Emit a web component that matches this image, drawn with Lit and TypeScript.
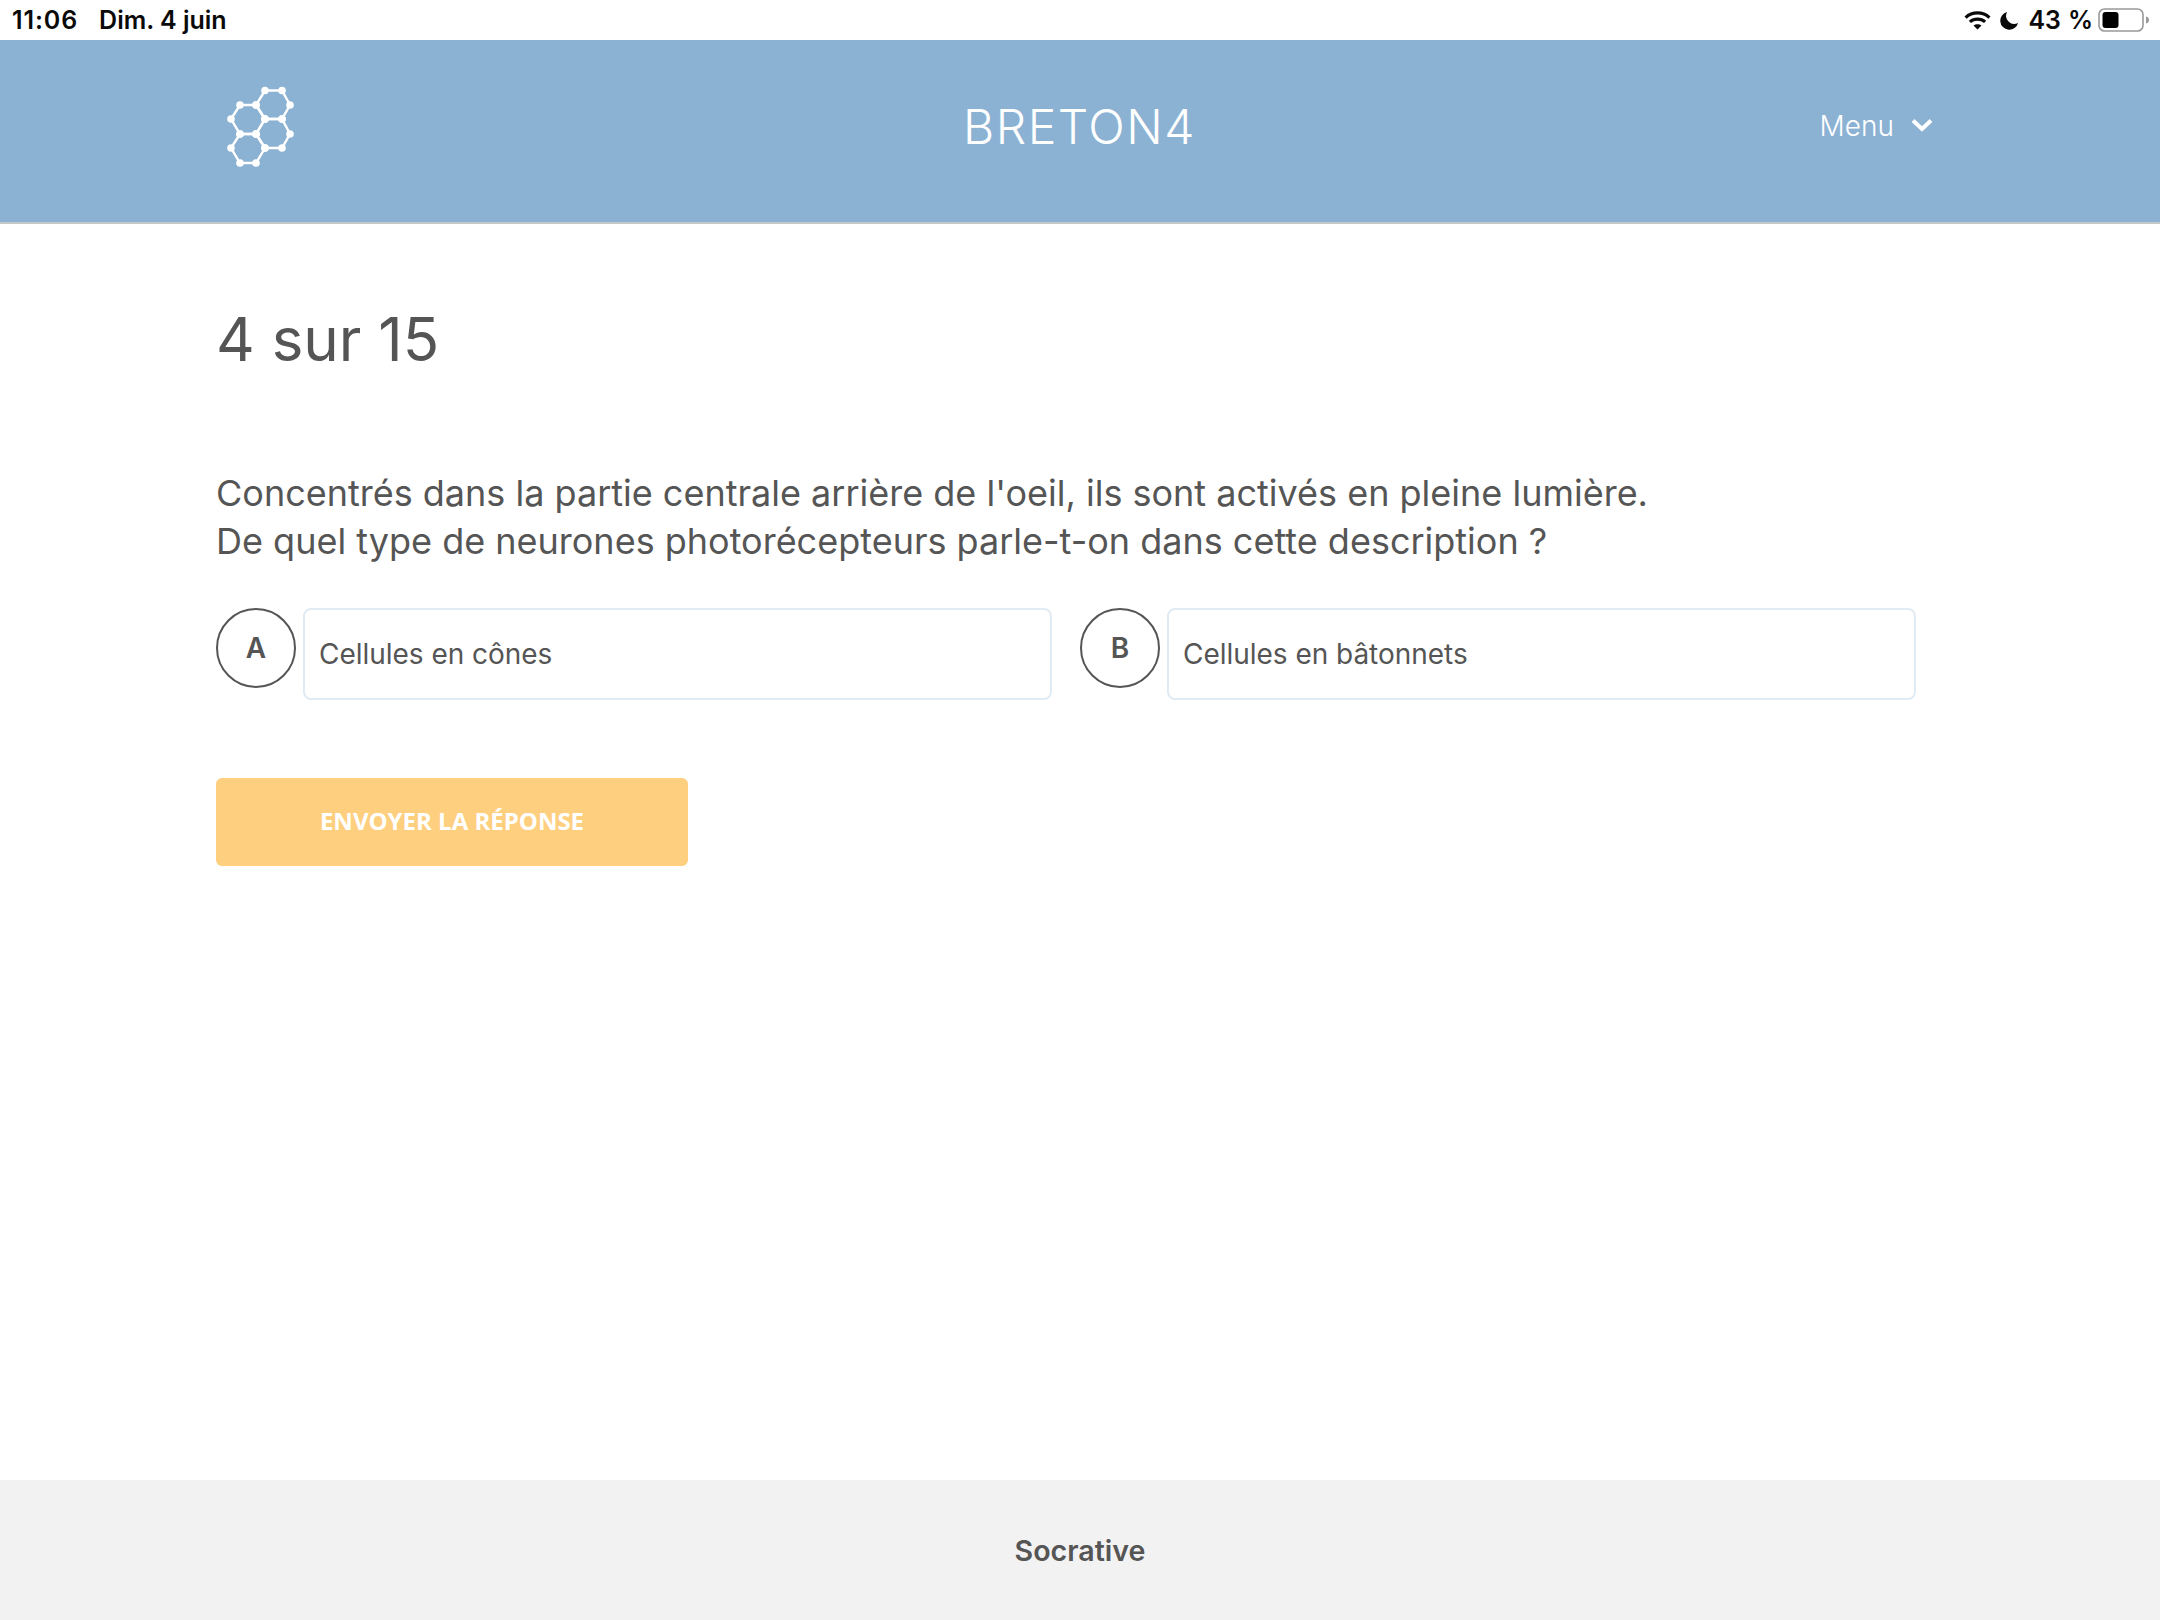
import { LitElement, html, css, svg } from "lit";
import { customElement } from "lit/decorators.js";

const hexes: number[][][] = [
  [[265, 89.5], [282, 89.5], [290, 104], [282, 118], [265, 118], [256, 104]],
  [[240, 104], [256, 104], [265, 118], [256, 133], [240, 133], [231, 118]],
  [[265, 118], [282, 118], [290, 133], [282, 147], [265, 147], [256, 133]],
  [[240, 133], [256, 133], [265, 147], [256, 162], [240, 162], [231, 147]],
];

@customElement("app-root")
export class AppRoot extends LitElement {
  static styles = css`
    :host { display: flex; flex-direction: column; width: 2160px; height: 1620px; background: #fff; color: #555; font-family: Inter, "Liberation Sans", sans-serif; overflow: hidden; }
    .status { height: 40px; flex: none; display: flex; align-items: center; justify-content: space-between; padding: 0 9px 0 12px; color: #0a0a0a; font-size: 25px; font-weight: 600; font-family: Inter, sans-serif; }
    .status-left { display: flex; gap: 21px; margin-top: -1px; }
    .time { letter-spacing: 0.9px; }
    .status-right { display: flex; align-items: center; }
    .wifi { width: 27px; height: 20px; margin-right: 9px; }
    .moon { width: 19px; height: 19px; margin-right: 10px; }
    .pct { margin-right: 5px; font-feature-settings: "tnum"; margin-top: -1px; }
    .batt { width: 53px; height: 24px; }
    .header { height: 182px; flex: none; background: #8cb2d3; border-bottom: 2px solid #c4c8cb; display: grid; grid-template-columns: 1fr auto 1fr; align-items: center; color: #fff; padding: 0 227px 0 226px; box-sizing: content-box; }
    .logo { width: 70px; height: 84px; margin-top: -7px; }
    .brand { font-size: 48px; font-weight: 300; letter-spacing: 1.5px; margin-top: -10px; }
    .menu { justify-self: end; display: flex; align-items: center; gap: 17px; font-size: 28px; font-weight: 300; margin-top: -10px; }
    .chev { width: 22px; height: 14px; margin-top: -2px; }
    main { flex: 1; padding: 0 216px; display: flex; flex-direction: column; }
    h1 { margin: 75px 0 0; font-size: 60px; font-weight: 400; line-height: 80px; }
    .q { margin: 90px 0 0; font-size: 36px; line-height: 48px; font-weight: 400; }
    .answers { display: flex; gap: 28px; margin-top: 43px; width: 1700px; }
    .answer { display: flex; gap: 7px; flex: none; }
    .circle { width: 80px; height: 80px; box-sizing: border-box; border: 2px solid #555; border-radius: 50%; display: flex; align-items: center; justify-content: center; font-size: 28px; font-weight: 600; }
    .box { width: 749px; height: 92px; box-sizing: border-box; border: 2px solid #e1ebf3; border-radius: 8px; padding: 0 14px; display: flex; align-items: center; font-size: 28px; letter-spacing: -0.03px; }
    button { margin-top: 78px; width: 472px; height: 88px; border: none; border-radius: 6px; background: #fecf7f; color: #fff; font-family: "Open Sans", sans-serif; font-weight: 700; font-size: 24px; padding: 0 0 4px; }
    footer { height: 140px; flex: none; background: #f2f2f2; display: flex; align-items: center; justify-content: center; font-size: 28.6px; font-weight: 600; box-sizing: border-box; }
  `;

  render() {
    const pts = hexes.flat();
    return html`
      <div class="status">
        <div class="status-left"><span class="time">11:06</span><span>Dim. 4 juin</span></div>
        <div class="status-right">
          <svg class="wifi" viewBox="0 0 28 21" fill="none" stroke="#0a0a0a" stroke-width="3.4">
            <path d="M1.500 8C8.500 1.500 19.500 1.500 26.500 8" />
            <path d="M6 12.500C10.500 8.500 17.500 8.500 22 12.500" />
            <path d="M14 20.500 9.800 16.200C12 14.400 16 14.400 18.200 16.200Z" fill="#0a0a0a" stroke="none" />
          </svg>
          <svg class="moon" viewBox="0 0 20 20"><path d="M7.500 1A9.500 9.500 0 1 0 19 12.500 8.500 8.500 0 0 1 7.500 1Z" fill="#0a0a0a" /></svg>
          <span class="pct">43 %</span>
          <svg class="batt" viewBox="0 0 53 24">
            <rect x="1" y="1" width="44" height="22" rx="5.500" fill="none" stroke="#999" stroke-width="1.600" />
            <rect x="4.500" y="4" width="16" height="16" rx="3" fill="#000" />
            <path d="M48 8.500c2.500.6 3 2 3 3.500s-.5 2.900-3 3.500Z" fill="#999" />
          </svg>
        </div>
      </div>
      <header class="header">
        <svg class="logo" viewBox="226 85 70 84">
          ${hexes.map((h) => svg`<polygon points=${h.map((p) => p.join(",")).join(" ")} fill="none" stroke="#fff" stroke-width="2.400" />`)}
          ${pts.map((p) => svg`<circle cx=${p[0]} cy=${p[1]} r="3.800" fill="#fff" />`)}
        </svg>
        <div class="brand">BRETON4</div>
        <div class="menu">
          <span>Menu</span>
          <svg class="chev" viewBox="0 0 22 14"><path d="M2 2.500 11 11 20 2.500" fill="none" stroke="#fff" stroke-width="4" /></svg>
        </div>
      </header>
      <main>
        <h1>4 sur 15</h1>
        <p class="q">Concentrés dans la partie centrale arrière de l'oeil, ils sont activés en pleine lumière.<br />De quel type de neurones photorécepteurs parle-t-on dans cette description ?</p>
        <div class="answers">
          <div class="answer"><div class="circle">A</div><div class="box">Cellules en cônes</div></div>
          <div class="answer"><div class="circle">B</div><div class="box">Cellules en bâtonnets</div></div>
        </div>
        <button>ENVOYER LA RÉPONSE</button>
      </main>
      <footer>Socrative</footer>
    `;
  }
}
